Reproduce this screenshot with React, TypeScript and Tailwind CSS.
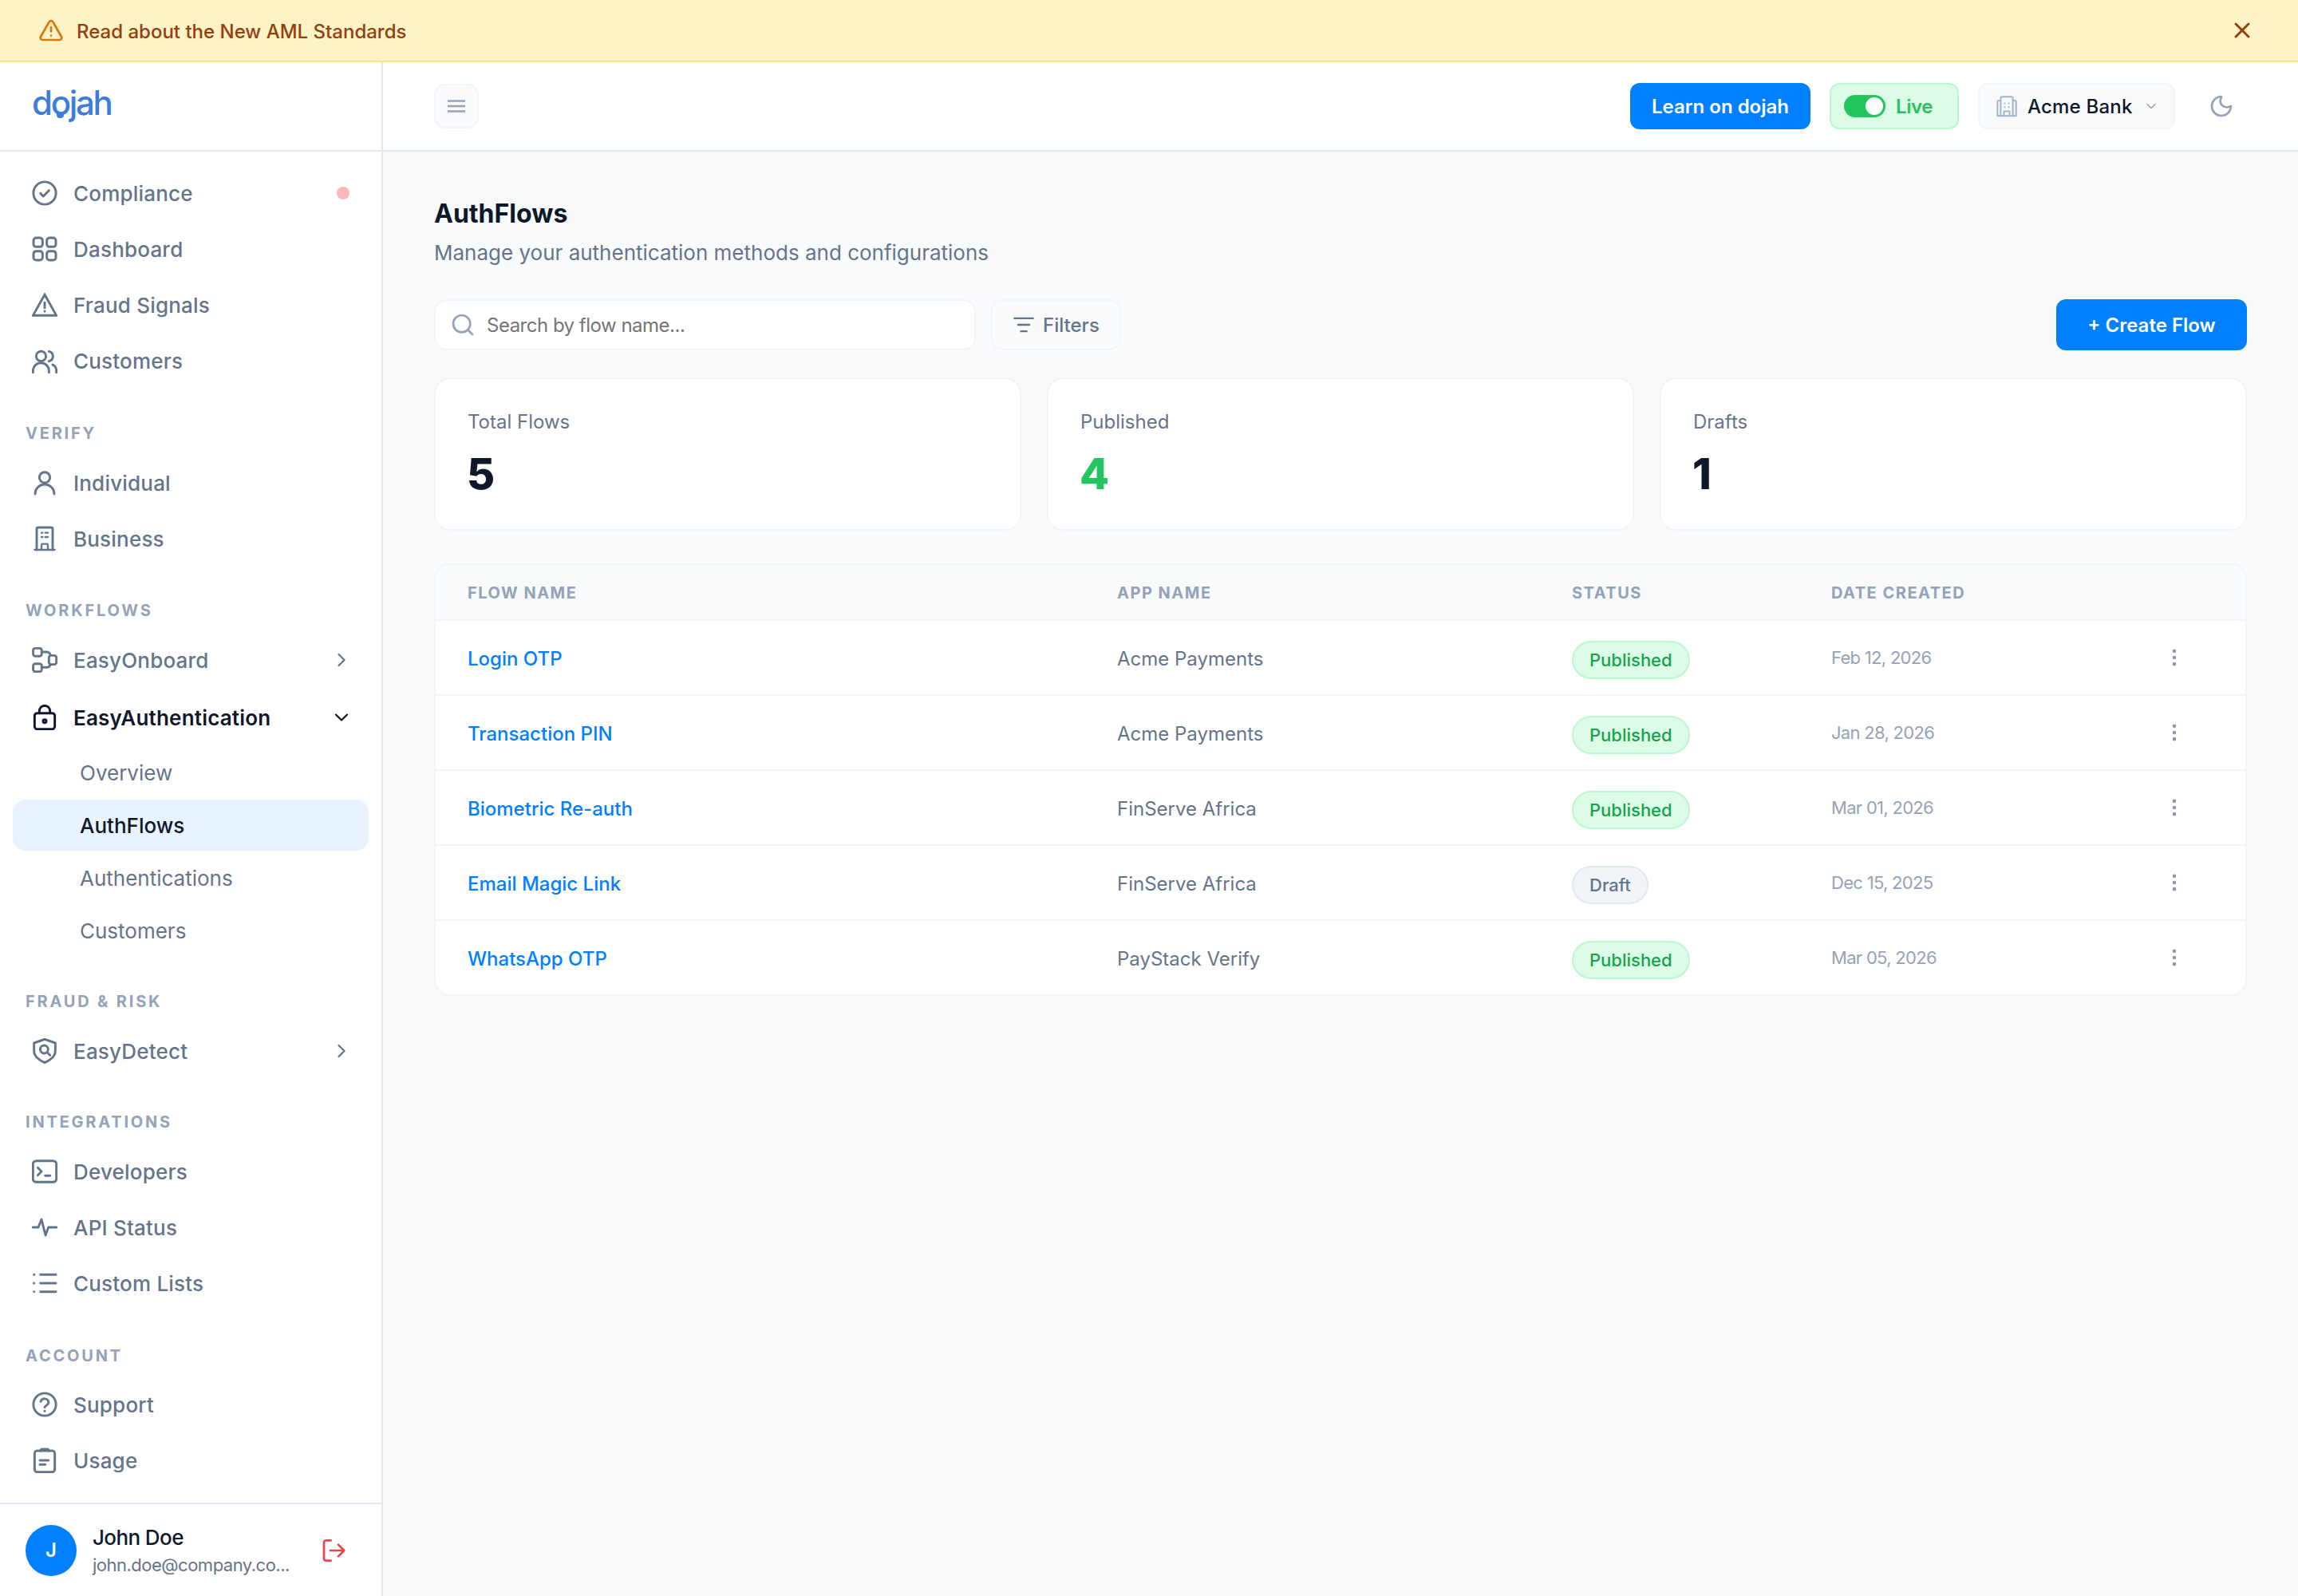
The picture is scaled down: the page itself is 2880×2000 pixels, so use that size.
import React from "react";
import { ChevronRight, ChevronDown, TriangleAlert, X, Moon, Search, ListFilter, MoreVertical } from "lucide-react";

const S = ({ children, className = "" }: { children: React.ReactNode; className?: string }) => (
  <svg viewBox="0 0 24 24" fill="none" stroke="currentColor" strokeWidth={2.2} strokeLinecap="round" strokeLinejoin="round" className={`w-8 h-8 shrink-0 ${className}`}>
    {children}
  </svg>
);

const Check = () => (
  <S>
    <circle cx="12" cy="12" r="10.6" />
    <path d="m8 12.3 2.7 2.7 5.3-5.5" />
  </S>
);
const Grid = () => (
  <S>
    <rect x="1.5" y="1.5" width="8.5" height="8.5" rx="2.5" />
    <rect x="14" y="1.5" width="8.5" height="8.5" rx="2.5" />
    <rect x="1.5" y="14" width="8.5" height="8.5" rx="2.5" />
    <rect x="14" y="14" width="8.5" height="8.5" rx="2.5" />
  </S>
);
const Triangle = () => (
  <S>
    <path d="M12 2.5 23 22H1Z" strokeLinejoin="miter" />
    <path d="M12 10v5M12 18v.2" />
  </S>
);
const People = () => (
  <S>
    <circle cx="8.6" cy="7.8" r="4.6" />
    <path d="M1 23v-1.5a7.5 7.5 0 0 1 15 0V23M16 3.3a4.7 4.7 0 0 1 0 9.2M19.5 15.7a6.5 6.5 0 0 1 3.5 5.8V23" />
  </S>
);
const Person = () => (
  <S>
    <circle cx="12" cy="7" r="5" />
    <path d="M3 22.5a9 9 0 0 1 18 0" />
  </S>
);
const Bldg = () => (
  <S>
    <path d="M4.5 22.5V3A1.5 1.5 0 0 1 6 1.5h12A1.5 1.5 0 0 1 19.5 3v19.5" />
    <path d="M2.5 22.5h19M9 22.5V18a1 1 0 0 1 1-1h4a1 1 0 0 1 1 1v4.5M9 6.5h1M12.5 6.5H15M9 10.5h1M12.5 10.5H15" strokeWidth={1.7} />
  </S>
);
const Flow = () => (
  <S>
    <rect x="1.2" y="1" width="8" height="7.5" rx="2" />
    <rect x="1.2" y="15.5" width="8" height="7.5" rx="2" />
    <rect x="16" y="7.8" width="7" height="8.4" rx="2" />
    <path d="M9.2 4.5h4a4 4 0 0 1 4.3 3.2M9.2 19h4a4 4 0 0 0 4.3-2.8" />
  </S>
);
const Lock = () => (
  <S>
    <rect x="2.5" y="8" width="19" height="15" rx="2.5" />
    <path d="M7 8V6a5 5 0 0 1 10 0v2" />
    <circle cx="12" cy="15.5" r="1.5" />
  </S>
);
const ShieldSearch = () => (
  <S>
    <path d="M12 1 22 4.5V12c0 5-5 9-10 11C7 21 2 17 2 12V4.5Z" />
    <circle cx="11.5" cy="10.5" r="3.7" />
    <path d="m14.5 13.5 2.5 2.5" />
  </S>
);
const Terminal = () => (
  <S>
    <rect x="1" y="2" width="22" height="20" rx="3" />
    <path d="m5.5 8.5 3.5 3.5-3.5 3.5M12.5 16H17" />
  </S>
);
const Pulse = () => (
  <S>
    <path d="M1 12h5l3-7.5 3.8 15 2.7-7.5H23" />
  </S>
);
const Lines = () => (
  <S>
    <path d="M8 4h14.5M8 12h14.5M8 20h14.5M2 4v.1M2 12v.1M2 20v.1" />
  </S>
);
const Help = () => (
  <S>
    <circle cx="12" cy="12" r="10.6" />
    <path d="M8.3 9.2a3.8 3.8 0 0 1 7.4 1c0 2.4-3.7 2.8-3.7 4.6M12 18.2v.1" />
  </S>
);
const Clip = () => (
  <S>
    <rect x="2.5" y="3" width="19" height="20" rx="2.5" />
    <path d="M8.5 3v-.5a1 1 0 0 1 1-1h5a1 1 0 0 1 1 1V3M7.5 12h8M7.5 16h5" />
  </S>
);
const Logout = () => (
  <svg viewBox="0 0 24 24" fill="none" stroke="currentColor" strokeWidth={2} strokeLinecap="round" strokeLinejoin="round" className="w-8 h-8 text-[#ef4444]">
    <path d="M9.5 2.5H5a2 2 0 0 0-2 2v15a2 2 0 0 0 2 2h4.5M9 12h13M16.5 6.5 22 12l-5.5 5.5" />
  </svg>
);
const Burger = () => (
  <svg viewBox="0 0 24 24" fill="none" stroke="currentColor" strokeWidth={2.4} className="w-6 h-6 text-[#94a3b8]">
    <path d="M1 5.5h22M1 12h22M1 18.5h22" />
  </svg>
);
const Office = () => (
  <svg viewBox="0 0 24 24" fill="none" stroke="currentColor" strokeWidth={1.7} strokeLinejoin="round" className="w-7 h-7 shrink-0 text-[#a3b3c8]">
    <path d="M2 22.5V7.5A1.5 1.5 0 0 1 3.5 6H5.5V3.5A1.5 1.5 0 0 1 7 2h10a1.5 1.5 0 0 1 1.5 1.5V6h2A1.5 1.5 0 0 1 22 7.5v15ZM5.5 6v16.5M18.5 6v16.5" />
    <path d="M9 22.5V17.5h6v5M9 9h1.5M13.5 9H15M9 13h1.5M13.5 13H15" />
  </svg>
);

const Chev = ({ down }: { down?: boolean }) =>
  down ? <ChevronDown className="w-7 h-7 mr-[-4px]" strokeWidth={1.9} /> : <ChevronRight className="w-7 h-7 mr-[-4px]" strokeWidth={1.9} />;

const Item = ({ icon, label, right, active, className = "" }: { icon: React.ReactNode; label: string; right?: React.ReactNode; active?: boolean; className?: string }) => (
  <div className={`mx-4 h-[70px] px-6 flex items-center gap-5 ${active ? "text-[#0f172a] font-semibold" : "text-[#64748b] font-medium"} ${className}`}>
    {icon}
    <span className="text-[26px] tracking-[0.2px] flex-1">{label}</span>
    {right}
  </div>
);

const Label = ({ children, className = "" }: { children: React.ReactNode; className?: string }) => (
  <div className={`h-[30px] px-8 flex items-center text-[20px] font-bold tracking-[2.8px] text-[#94a3b8] uppercase ${className}`}>{children}</div>
);

const Sub = ({ children, active }: { children: React.ReactNode; active?: boolean }) => (
  <div className={`mx-4 h-16 pl-[84px] flex items-center rounded-2xl text-[26px] ${active ? "bg-[#e8f3ff] text-[#0f172a] font-medium" : "text-[#64748b] font-normal"}`}>{children}</div>
);

const rows = [
  ["Login OTP", "Acme Payments", "Published", "Feb 12, 2026"],
  ["Transaction PIN", "Acme Payments", "Published", "Jan 28, 2026"],
  ["Biometric Re-auth", "FinServe Africa", "Published", "Mar 01, 2026"],
  ["Email Magic Link", "FinServe Africa", "Draft", "Dec 15, 2025"],
  ["WhatsApp OTP", "PayStack Verify", "Published", "Mar 05, 2026"],
];

const cols = "grid grid-cols-[814px_570px_325px_1fr_128px] items-center pl-10";

export default function App() {
  return (
    <div className="w-[2880px] h-[2000px] flex flex-col overflow-hidden bg-[#f8fafc] font-['Inter',sans-serif]">
      <div className="h-[78px] shrink-0 bg-[#fef3c7] border-b-2 border-[#fde68a] flex items-center pl-12 pr-[54px]">
        <TriangleAlert className="w-8 h-8 text-[#d97706]" strokeWidth={2} />
        <span className="ml-4 pt-[3px] text-[24px] font-medium text-[#92400e] flex-1">Read about the New AML Standards</span>
        <X className="w-8 h-8 text-[#92400e]" strokeWidth={2.2} />
      </div>

      <div className="flex flex-1 min-h-0">
        <aside className="w-[480px] shrink-0 bg-white border-r-2 border-[#e2e8f0] flex flex-col">
          <div className="h-[112px] shrink-0 border-b-2 border-[#e2e8f0] pl-10 flex items-center">
            <div className="relative text-[42px] leading-none font-medium tracking-[-2.3px] text-[#3b7ddd] pb-2">
              dojah
              <span className="absolute left-[31px] top-[33px] w-[9px] h-[7px] rounded-b bg-[#3b7ddd]" />
            </div>
          </div>
          <nav className="flex-1 pt-[17px] flex flex-col">
            <Item icon={<Check />} label="Compliance" right={<span className="w-4 h-4 rounded-full bg-[#fcb8b8]" />} />
            <Item icon={<Grid />} label="Dashboard" />
            <Item icon={<Triangle />} label="Fraud Signals" />
            <Item icon={<People />} label="Customers" />

            <Label className="mt-[41px] mb-3">Verify</Label>
            <Item icon={<Person />} label="Individual" />
            <Item icon={<Bldg />} label="Business" />

            <Label className="mt-10 mb-3">Workflows</Label>
            <Item icon={<Flow />} label="EasyOnboard" right={<Chev />} />
            <Item icon={<Lock />} label="EasyAuthentication" active right={<Chev down />} className="mt-[2px]" />
            <div className="mt-[2px] flex flex-col gap-[2px]">
              <Sub>Overview</Sub>
              <Sub active>AuthFlows</Sub>
              <Sub>Authentications</Sub>
              <Sub>Customers</Sub>
            </div>

            <Label className="mt-[42px] mb-3">Fraud &amp; Risk</Label>
            <Item icon={<ShieldSearch />} label="EasyDetect" right={<Chev />} />

            <Label className="mt-[39px] mb-3">Integrations</Label>
            <Item icon={<Terminal />} label="Developers" />
            <Item icon={<Pulse />} label="API Status" />
            <Item icon={<Lines />} label="Custom Lists" />

            <Label className="mt-[41px] mb-[11px]">Account</Label>
            <Item icon={<Help />} label="Support" />
            <Item icon={<Clip />} label="Usage" />
          </nav>
          <div className="h-[117px] shrink-0 border-t-2 border-[#e2e8f0] pl-8 flex items-center">
            <div className="w-16 h-16 rounded-full bg-[#0080ff] text-white flex items-center justify-center text-[24px] font-semibold">J</div>
            <div className="ml-5 flex-1 flex flex-col">
              <span className="text-[26px] tracking-[-0.6px] leading-[36px] font-medium text-[#0f172a]">John Doe</span>
              <span className="text-[22px] tracking-[-0.5px] leading-[32px] text-[#64748b]">john.doe@company.co...</span>
            </div>
            <div className="mr-[44px]"><Logout /></div>
          </div>
        </aside>

        <div className="flex-1 min-w-0 flex flex-col">
          <header className="h-[112px] shrink-0 bg-white border-b-2 border-[#e2e8f0] pl-16 pr-[64px] flex items-center">
            <button className="w-[56px] h-[56px] rounded-[14px] bg-[#f8fafc] border-2 border-[#f1f5f9] flex items-center justify-center">
              <Burger />
            </button>
            <div className="flex-1" />
            <button className="w-[226px] h-[58px] pt-[2px] rounded-xl bg-[#0080ff] text-white text-[24px] font-semibold">Learn on dojah</button>
            <div className="ml-6 w-[162px] h-[58px] rounded-xl bg-[#dcfce7] border-2 border-[#bbf7d0] flex items-center pl-[16px] gap-[13px]">
              <span className="w-[52px] h-7 rounded-full bg-[#22c55e] flex items-center justify-end pr-[3px]">
                <span className="w-[22px] h-[22px] rounded-full bg-white" />
              </span>
              <span className="pt-[2px] text-[24px] tracking-[-0.4px] font-semibold text-[#22c55e]">Live</span>
            </div>
            <div className="ml-6 w-[247px] h-[58px] rounded-xl bg-[#f8fafc] border-2 border-[#f1f5f9] flex items-center pl-[20px] pr-[18px]">
              <Office />
              <span className="ml-[12px] pt-[2px] text-[24px] tracking-[0.2px] font-medium text-[#0f172a] flex-1">Acme Bank</span>
              <ChevronDown className="w-5 h-5 text-[#94a3b8]" />
            </div>
            <Moon className="ml-[42px] w-8 h-8 text-[#94a3b8] mr-[16px]" />
          </header>

          <main className="flex-1 px-16 pt-[58px]">
            <h1 className="text-[32px] leading-[40px] font-bold text-[#0f172a]">AuthFlows</h1>
            <p className="mt-[9px] text-[26px] leading-[40px] text-[#64748b]">Manage your authentication methods and configurations</p>

            <div className="mt-[38px] flex items-stretch h-16">
              <div className="w-[679px] rounded-2xl bg-white border-2 border-[#f1f5f9] flex items-center pl-[18px]">
                <Search className="w-8 h-8 text-[#94a3b8]" />
                <span className="ml-[14px] pt-[2px] text-[24px] tracking-[-0.5px] text-[#757575]">Search by flow name...</span>
              </div>
              <div className="ml-[18px] w-[164px] rounded-2xl bg-[#f8fafc] border-2 border-[#f1f5f9] flex items-center pl-[26px] gap-[10px]">
                <ListFilter className="w-7 h-7 text-[#64748b]" />
                <span className="pt-[2px] text-[24px] font-medium text-[#64748b]">Filters</span>
              </div>
              <div className="flex-1" />
              <button className="w-[239px] pt-[2px] rounded-xl bg-[#0080ff] text-white text-[24px] font-semibold">+ Create Flow</button>
            </div>

            <div className="mt-[34px] grid grid-cols-3 gap-8">
              {[["Total Flows", "5", "text-[#0f172a]"], ["Published", "4", "text-[#22c55e]"], ["Drafts", "1", "text-[#0f172a]"]].map(([a, b, c]) => (
                <div key={a} className="h-[192px] rounded-[20px] bg-white border-2 border-[#f1f5f9] pl-[39px] pr-10 pt-[36px]">
                  <div className="pl-px text-[24px] leading-[36px] text-[#64748b]">{a}</div>
                  <div className={`mt-[15px] text-[54px] leading-[64px] font-extrabold ${c}`}>{b}</div>
                </div>
              ))}
            </div>

            <div className="mt-[41px] rounded-[20px] bg-white border-2 border-[#f1f5f9] overflow-hidden">
              <div className={`${cols} h-[70px] pt-px bg-[#f8fafc] border-b-2 border-[#f1f5f9] text-[20px] font-bold tracking-[1.5px] uppercase text-[#94a3b8]`}>
                <span>Flow Name</span>
                <span>App Name</span>
                <span>Status</span>
                <span>Date Created</span>
                <span />
              </div>
              {rows.map(([n, a, s, d], i) => (
                <div key={n} className={`${cols} ${i < 4 ? "h-[94px] border-b-2 border-[#f1f5f9]" : "h-[92px]"}`}>
                  <span className="pt-[3px] text-[24px] font-medium text-[#0080ff]">{n}</span>
                  <span className="pt-[3px] text-[24px] text-[#64748b]">{a}</span>
                  <span className="pt-[6px]">
                    <span className={`inline-flex items-center h-12 px-5 rounded-full border-2 text-[22px] font-medium ${s === "Draft" ? "bg-[#f1f5f9] border-[#e2e8f0] text-[#64748b]" : "bg-[#dcfce7] border-[#bbf7d0] text-[#16a34a]"}`}>{s}</span>
                  </span>
                  <span className="text-[22px] tracking-[-0.7px] text-[#94a3b8]">{d}</span>
                  <span><MoreVertical className="w-7 h-7 text-[#8a99ae] ml-[25px]" /></span>
                </div>
              ))}
            </div>
          </main>
        </div>
      </div>
    </div>
  );
}
